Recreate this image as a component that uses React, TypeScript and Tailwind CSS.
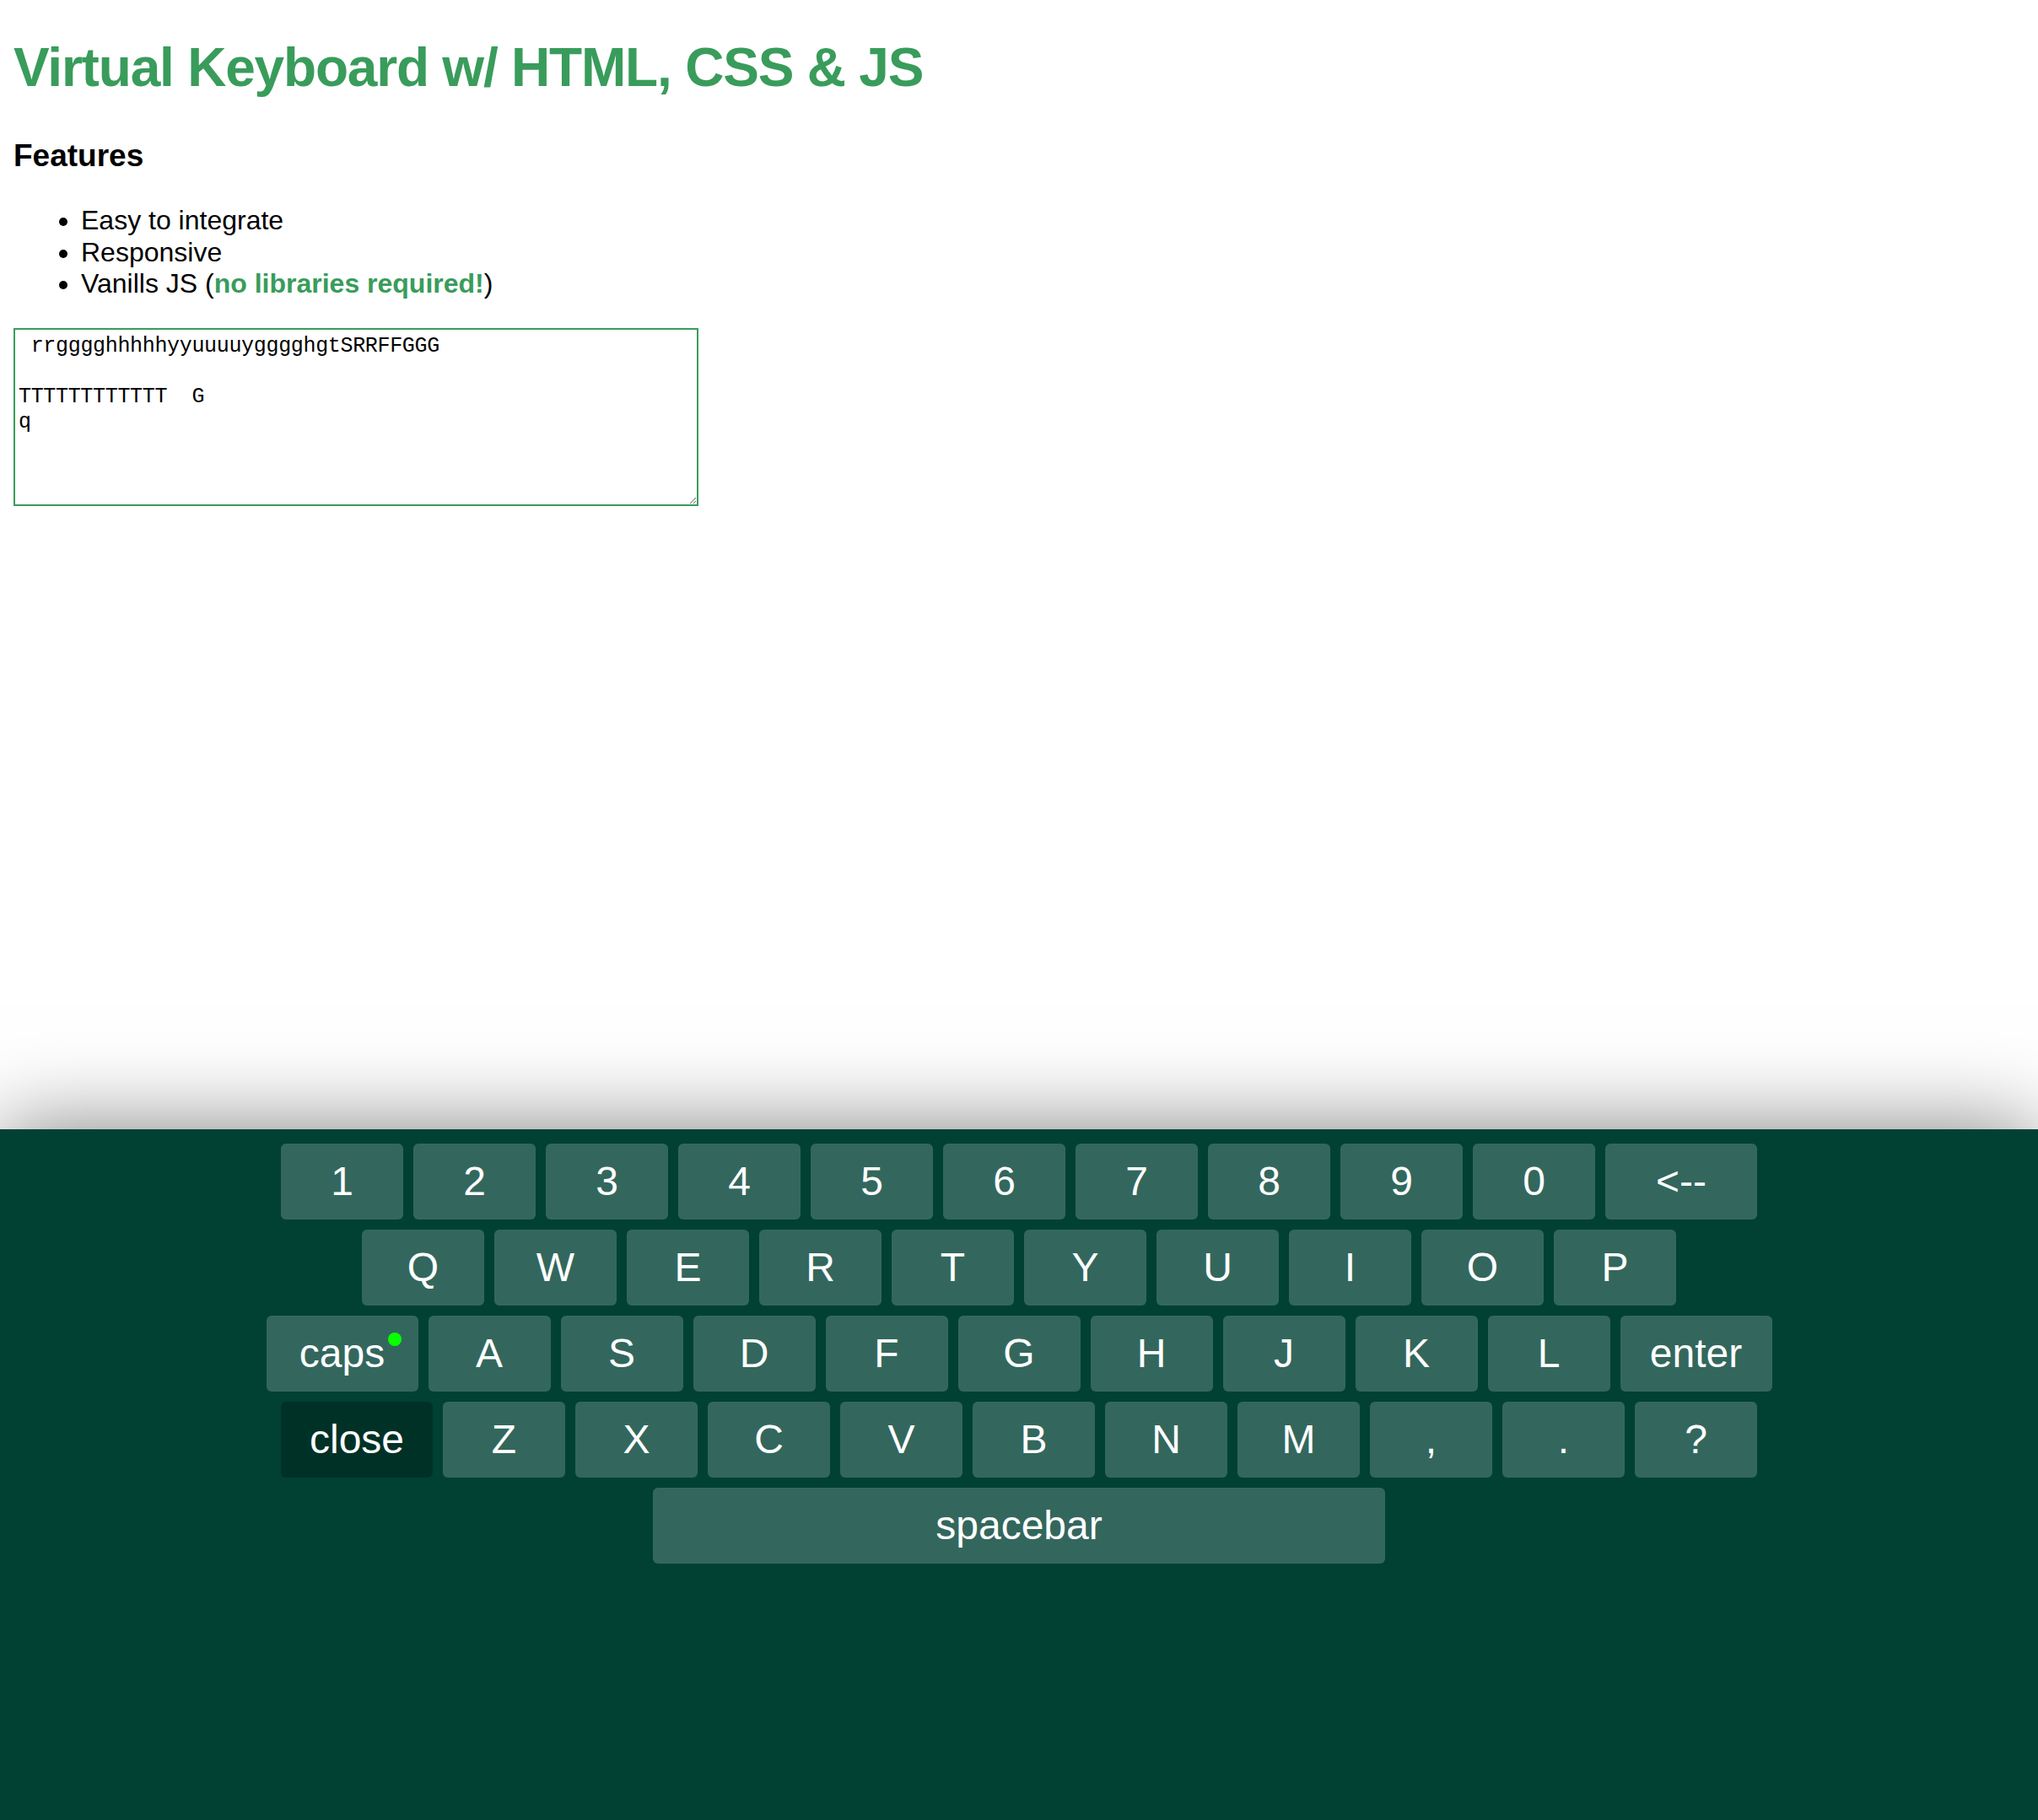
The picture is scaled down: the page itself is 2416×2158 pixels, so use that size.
import React from 'react';

const rows: { label: string; kind?: 'wide' | 'caps' | 'dark' | 'space' }[][] = [
  [
    { label: '1' }, { label: '2' }, { label: '3' }, { label: '4' }, { label: '5' },
    { label: '6' }, { label: '7' }, { label: '8' }, { label: '9' }, { label: '0' },
    { label: '<--', kind: 'wide' },
  ],
  [
    { label: 'Q' }, { label: 'W' }, { label: 'E' }, { label: 'R' }, { label: 'T' },
    { label: 'Y' }, { label: 'U' }, { label: 'I' }, { label: 'O' }, { label: 'P' },
  ],
  [
    { label: 'caps', kind: 'caps' },
    { label: 'A' }, { label: 'S' }, { label: 'D' }, { label: 'F' }, { label: 'G' },
    { label: 'H' }, { label: 'J' }, { label: 'K' }, { label: 'L' },
    { label: 'enter', kind: 'wide' },
  ],
  [
    { label: 'close', kind: 'dark' },
    { label: 'Z' }, { label: 'X' }, { label: 'C' }, { label: 'V' }, { label: 'B' },
    { label: 'N' }, { label: 'M' }, { label: ',' }, { label: '.' }, { label: '?' },
  ],
  [{ label: 'spacebar', kind: 'space' }],
];

const Key = ({ label, kind }: { label: string; kind?: string }) => {
  let size = 'w-[145px] bg-[#33675d]';
  if (kind === 'wide' || kind === 'caps') size = 'w-[180px] bg-[#33675d]';
  if (kind === 'dark') size = 'w-[180px] bg-[#003127]';
  if (kind === 'space') size = 'w-[868px] bg-[#33675d]';
  return (
    <div className={`relative h-[90px] ${size} rounded-[6px] flex items-center justify-center text-white text-[48px] leading-none`}>
      {label}
      {kind === 'caps' && (
        <span className="absolute top-[20px] right-[20px] w-[16px] h-[16px] rounded-full bg-[#08ff00]" />
      )}
    </div>
  );
};

const text = ' rrgggghhhhhyyuuuuygggghgtSRRFFGGG\n\nTTTTTTTTTTTT  G\nq';

export default function App() {
  return (
    <div className="h-screen flex flex-col bg-white overflow-hidden" style={{ fontFamily: '"Liberation Sans", Arial, sans-serif' }}>
      <div className="flex-1 px-[16px]">
        <h1 className="mt-[43px] text-[64px] leading-[74px] font-bold tracking-[-1.2px] text-[#399c5b]">
          Virtual Keyboard w/ HTML, CSS &amp; JS
        </h1>
        <h3 className="mt-[46px] text-[37px] leading-[43px] font-bold text-black">Features</h3>
        <ul className="mt-[37px] pl-[80px] list-disc text-[32px] leading-[37.5px] text-black">
          <li>Easy to integrate</li>
          <li>Responsive</li>
          <li>
            Vanills JS (<span className="font-bold text-[#399c5b]">no libraries required!</span>)
          </li>
        </ul>
        <textarea
          className="block mt-[33px] w-[812px] h-[211px] border-2 border-[#399c5b] pt-[5px] pl-[4px] text-[25px] leading-[30px] tracking-[-0.33px] text-black outline-none"
          style={{ fontFamily: '"Liberation Mono", monospace' }}
          defaultValue={text}
          readOnly
        />
      </div>
      <div className="relative z-10 h-[819px] bg-[#004134] pt-[17px] shadow-[0_0_100px_rgba(0,0,0,0.5)] flex flex-col gap-[12px]">
        {rows.map((row, i) => (
          <div key={i} className="flex justify-center gap-[12px]">
            {row.map((k, j) => (
              <Key key={j} label={k.label} kind={k.kind} />
            ))}
          </div>
        ))}
      </div>
    </div>
  );
}
